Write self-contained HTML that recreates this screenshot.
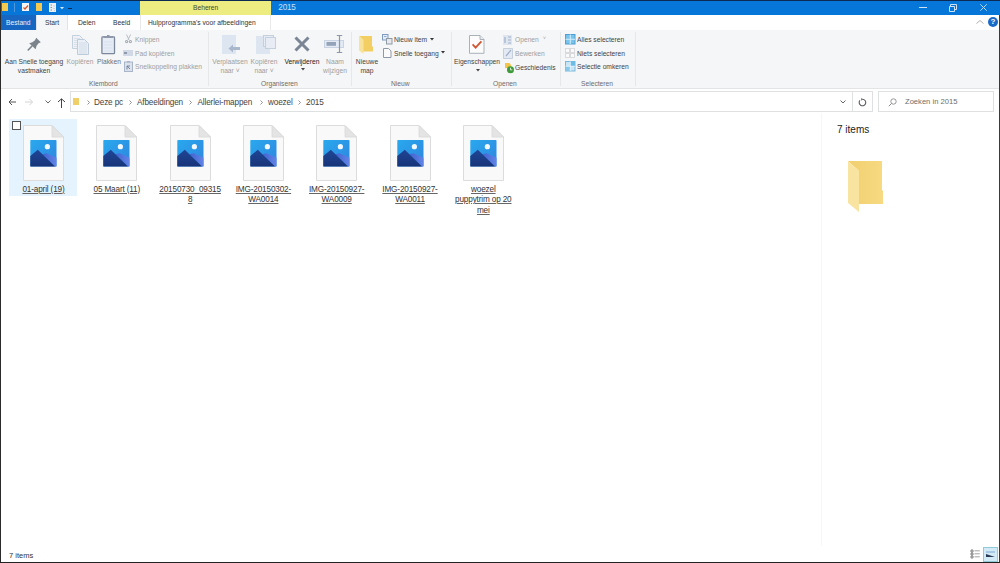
<!DOCTYPE html>
<html><head><meta charset="utf-8">
<style>
*{margin:0;padding:0;box-sizing:border-box}
html,body{width:1000px;height:563px;overflow:hidden;background:#fff;font-family:"Liberation Sans",sans-serif;color:#444}
.a{position:absolute;white-space:nowrap}
svg.a{overflow:visible}
.t7{font-size:6.7px;line-height:9px}
.t8{font-size:8px;line-height:10px}
.dis{color:#a0a0a0}
.c{text-align:center}
.glabel{color:#6d6d6d}
.lbl{font-size:8.2px;line-height:10.5px;letter-spacing:-0.15px;color:#333;text-align:center;width:72px;text-decoration:underline;text-decoration-color:#666;text-underline-offset:0.6px;text-decoration-thickness:0.8px}
</style></head><body>
<svg width="0" height="0" style="position:absolute">
<defs>
<linearGradient id="sky" x1="0" y1="0" x2="1" y2="1"><stop offset="0" stop-color="#29a9ee"/><stop offset="1" stop-color="#2f84de"/></linearGradient>
<linearGradient id="dm" x1="0" y1="0" x2="0" y2="1"><stop offset="0" stop-color="#1f4596"/><stop offset="1" stop-color="#183478"/></linearGradient>
<linearGradient id="lm" x1="0" y1="0" x2="1" y2="0"><stop offset="0" stop-color="#4262cf"/><stop offset="1" stop-color="#6284e6"/></linearGradient>
<symbol id="doc" viewBox="0 0 41 56">
<path d="M0.5 0.5 H29 L40.5 12 V55.5 H0.5 Z" fill="#f9f9f9" stroke="#dcdcdc" stroke-width="1"/>
<path d="M29 0.5 V12 H40.5 Z" fill="#e4e4e4" stroke="#d8d8d8" stroke-width="0.8"/>
<rect x="7.3" y="15" width="26.2" height="26.6" rx="0.8" fill="url(#sky)"/>
<path d="M19.5 29.3 L23.5 28.3 L33.5 32.8 V41.6 H32 Z" fill="url(#lm)"/>
<path d="M7.3 31 L14.8 24.7 L32 41.6 H7.3 Z" fill="url(#dm)"/>
<circle cx="24.4" cy="21.7" r="2.6" fill="#f2f8ff"/>
</symbol>
</defs>
</svg>

<!-- ===== Title bar ===== -->
<div class="a" style="left:0;top:0;width:1000px;height:15px;background:#0677d8"></div>
<div class="a" style="left:0;top:0;width:1000px;height:1px;background:#0d2a55"></div>
<!-- qat icons -->
<div class="a" style="left:2px;top:3px;width:6px;height:8px;background:#f3c94f"></div>
<div class="a" style="left:14px;top:3px;width:1px;height:9px;background:#4f98de"></div>
<div class="a" style="left:22px;top:3px;width:7px;height:8px;background:#f4f4f4"></div>
<svg class="a" style="left:22px;top:3px" width="7" height="8"><path d="M1.5 4.5 L3 6 L6 2.5" stroke="#d9532b" stroke-width="1.2" fill="none"/></svg>
<div class="a" style="left:36px;top:3px;width:6px;height:8px;background:#f3c94f"></div>
<div class="a" style="left:49px;top:3px;width:7px;height:9px;background:#e8eef5"></div>
<svg class="a" style="left:49px;top:3px" width="7" height="9"><path d="M1.5 2 H3 M1.5 4.5 H3 M1.5 7 H3" stroke="#a09080" stroke-width="1"/><path d="M4 3 H6 M4 5.5 H6 M5 7.5 H6" stroke="#c8ccd4" stroke-width="0.8"/></svg>
<svg class="a" style="left:60px;top:6.5px" width="4" height="3"><path d="M0 0 H4 L2 2.2 Z" fill="#d5e8fa"/></svg>
<div class="a" style="left:68px;top:8px;width:4px;height:1px;background:#0b2a56"></div>
<!-- beheren -->
<div class="a" style="left:140px;top:1px;width:131px;height:14px;background:#ecec80"></div>
<div class="a t7" style="left:193px;top:3px;color:#4a4a30">Beheren</div>
<div class="a t8" style="left:278.3px;top:3px;color:#c8e2fa;font-size:8.2px;letter-spacing:-0.2px">2015</div>
<!-- window controls -->
<div class="a" style="left:919px;top:7px;width:8px;height:1px;background:#cfe2f6"></div>
<svg class="a" style="left:948px;top:4px" width="9" height="8"><path d="M1.5 2.5 H6.5 V7.5 H1.5 Z M2.5 2.5 V0.5 H8.5 V5.5 H6.5" stroke="#cfe2f6" stroke-width="1" fill="none"/></svg>
<svg class="a" style="left:980px;top:4px" width="7" height="7"><path d="M0.3 0.3 L6.7 6.7 M6.7 0.3 L0.3 6.7" stroke="#bcdaf5" stroke-width="1" fill="none"/></svg>

<!-- ===== Tabs ===== -->
<div class="a" style="left:0;top:15px;width:1000px;height:15px;background:#fff"></div>
<div class="a" style="left:0;top:15px;width:36px;height:15px;background:#1766c1"></div>
<div class="a t7" style="left:6px;top:18px;color:#e8f0fa">Bestand</div>
<div class="a" style="left:36px;top:15px;width:32px;height:15px;background:#f5f6f7;border-left:1px solid #e2e3e5;border-right:1px solid #e2e3e5"></div>
<div class="a t7" style="left:45px;top:18px;color:#333">Start</div>
<div class="a t7" style="left:78px;top:18px;color:#333">Delen</div>
<div class="a t7" style="left:113px;top:18px;color:#333">Beeld</div>
<div class="a" style="left:140px;top:15px;width:131px;height:15px;border-left:1px solid #e8e8e8;border-right:1px solid #e8e8e8"></div>
<div class="a t7" style="left:148px;top:18px;color:#333">Hulpprogramma's voor afbeeldingen</div>
<svg class="a" style="left:976px;top:20px" width="8" height="4"><path d="M0.5 3.5 L4 0.5 L7.5 3.5" stroke="#b0b0b0" stroke-width="1" fill="none"/></svg>
<div class="a" style="left:988px;top:17px;width:10px;height:10px;border-radius:50%;background:#1b6ac6"></div>
<div class="a" style="left:988px;top:17px;width:10px;font-size:8px;line-height:10px;font-weight:bold;color:#fff;text-align:center">?</div>

<!-- ===== Ribbon ===== -->
<div class="a" style="left:0;top:30px;width:1000px;height:59px;background:#f5f6f7;border-bottom:1px solid #e3e4e6"></div>
<div class="a" style="left:208px;top:32px;width:1px;height:54px;background:#e6e7e9"></div>
<div class="a" style="left:351px;top:32px;width:1px;height:54px;background:#e6e7e9"></div>
<div class="a" style="left:451px;top:32px;width:1px;height:54px;background:#e6e7e9"></div>
<div class="a" style="left:560px;top:32px;width:1px;height:54px;background:#e6e7e9"></div>
<div class="a" style="left:635px;top:32px;width:1px;height:54px;background:#e6e7e9"></div>

<!-- Klembord -->
<svg class="a" style="left:27px;top:37px" width="15" height="15"><path d="M9.2 0.8 L13.8 5.3 L11.6 6.2 L9.6 8.8 L8.6 12.2 L2.2 6.2 L5.4 5.2 L8 3.2 Z" fill="#7d838b"/><path d="M4.8 9.2 L1.2 13" stroke="#7d838b" stroke-width="1.6" stroke-linecap="round"/></svg>
<div class="a t7 c" style="left:0;top:57px;width:68px">Aan Snelle toegang</div>
<div class="a t7 c" style="left:0;top:66px;width:68px">vastmaken</div>
<svg class="a" style="left:72px;top:35px" width="17" height="20"><path d="M0.5 0.5 H7.5 L10.5 3.5 V13.5 H0.5 Z" fill="#eef2f8" stroke="#c5d0dd"/><path d="M2 3.5H8M2 5.5H9M2 7.5H9M2 9.5H9M2 11.5H9" stroke="#cfd8e4" stroke-width="0.7"/><path d="M5.5 4.5 H12.5 L16.5 8.5 V19.5 H5.5 Z" fill="#eaf0f8" stroke="#c0cbda"/><path d="M7 8H15M7 10H15M7 12H15M7 14H15M7 16H15M7 18H15" stroke="#c9d3e1" stroke-width="0.7"/></svg>
<div class="a t7 c dis" style="left:62px;top:57px;width:36px">Kopiëren</div>
<svg class="a" style="left:101px;top:35px" width="15" height="20"><rect x="0.9" y="1.9" width="12.6" height="16.8" rx="0.8" fill="#e6ecf6" stroke="#7c879a" stroke-width="1.3"/><path d="M3 7H11.5M3 10H11.5M3 13H11.5M3 16H11.5" stroke="#d2dbea" stroke-width="0.7"/><rect x="2.5" y="1" width="9.5" height="2" fill="#8e98aa"/><rect x="6" y="0" width="2.5" height="1.5" fill="#8e98aa"/></svg>
<div class="a t7 c" style="left:96px;top:57px;width:26px;color:#707070">Plakken</div>
<svg class="a" style="left:124px;top:34px" width="9" height="10"><path d="M2.5 0.5 L5 6 M6.5 0.5 L4 6" stroke="#b8bec6" stroke-width="1"/><circle cx="2.6" cy="7.6" r="1.6" fill="#a3a9b2"/><circle cx="6.4" cy="7.6" r="1.6" fill="#a3a9b2"/><circle cx="2.6" cy="7.6" r="0.6" fill="#eef0f3"/><circle cx="6.4" cy="7.6" r="0.6" fill="#eef0f3"/></svg>
<div class="a t7 dis" style="left:135px;top:35px">Knippen</div>
<div class="a" style="left:123px;top:50px;width:10px;height:6px;background:#d2d9e6"></div>
<div class="a" style="left:124px;top:52px;width:3px;height:2px;background:#8f99ab"></div>
<div class="a t7 dis" style="left:135px;top:48.5px">Pad kopiëren</div>
<svg class="a" style="left:124px;top:61px" width="9" height="11"><rect x="0.5" y="1" width="8" height="9.5" fill="#dbe2ee" stroke="#a9b5c8"/><rect x="3" y="0" width="3" height="1.5" fill="#a9b5c8"/><path d="M3 8.5 V5 H6 M3 5 L6 8" stroke="#6b7a93" stroke-width="0.9" fill="none"/></svg>
<div class="a t7 dis" style="left:135px;top:62px">Snelkoppeling plakken</div>
<div class="a t7 glabel" style="left:89px;top:79px">Klembord</div>

<!-- Organiseren -->
<svg class="a" style="left:222px;top:35px" width="19" height="20"><rect x="0" y="0" width="14" height="19" fill="#dde5f1"/><path d="M6.5 13.5 L11 9.5 V12 H18 V15 H11 V17.5 Z" fill="#a9b7cd"/></svg>
<div class="a t7 c dis" style="left:209px;top:57px;width:42px">Verplaatsen</div>
<div class="a t7 c dis" style="left:209px;top:66px;width:42px">naar ˅</div>
<svg class="a" style="left:256px;top:35px" width="20" height="20"><rect x="0" y="1" width="14" height="18" fill="#dde5f1"/><rect x="7.5" y="0.5" width="10" height="11" fill="#e8edf5" stroke="#c6cfdc"/><rect x="9.5" y="2.5" width="10" height="11" fill="#e8edf5" stroke="#c6cfdc"/></svg>
<div class="a t7 c dis" style="left:246px;top:57px;width:36px">Kopiëren</div>
<div class="a t7 c dis" style="left:246px;top:66px;width:36px">naar ˅</div>
<svg class="a" style="left:293px;top:35px" width="18" height="18"><path d="M2.5 2.5 L15.5 15.5 M15.5 2.5 L2.5 15.5" stroke="#7a8595" stroke-width="3" stroke-linecap="butt"/></svg>
<div class="a t7 c" style="left:283px;top:57px;width:38px;color:#222">Verwijderen</div>
<svg class="a" style="left:300.5px;top:67.5px" width="4" height="3"><path d="M0 0 H4 L2 2.5 Z" fill="#444"/></svg>
<svg class="a" style="left:324px;top:34px" width="22" height="21"><rect x="0.5" y="6.5" width="19" height="7" fill="#e3eaf5" stroke="#c9d3e2"/><rect x="2.5" y="8" width="9.5" height="3.8" fill="#95a3b8"/><path d="M15.5 1.8 V18.4 M12.8 1.5 H18.2 M12.8 18.5 H18.2" stroke="#8d97a6" stroke-width="1.2"/></svg>
<div class="a t7 c dis" style="left:319px;top:57px;width:32px">Naam</div>
<div class="a t7 c dis" style="left:319px;top:66px;width:32px">wijzigen</div>
<div class="a t7 glabel" style="left:261px;top:79px">Organiseren</div>

<!-- Nieuw -->
<svg class="a" style="left:359px;top:36px" width="15" height="18"><path d="M0 0 H13 V10 L14 11 V15.5 H4 V4 Z" fill="#f3cf63"/><path d="M0 0 L4.5 4 V18 L0 14.5 Z" fill="#f9e39c"/></svg>
<div class="a t7 c" style="left:352px;top:57px;width:30px">Nieuwe</div>
<div class="a t7 c" style="left:352px;top:66px;width:30px">map</div>
<svg class="a" style="left:382px;top:34px" width="11" height="11"><rect x="0.5" y="0.5" width="5.5" height="5.5" fill="#e3ecf8" stroke="#7f9cc0"/><rect x="4.5" y="4.5" width="5.5" height="5.5" fill="#e6e8ec" stroke="#9099a6"/><path d="M2 2.5 H4.5" stroke="#7f9cc0" stroke-width="0.8"/></svg>
<div class="a t7" style="left:394px;top:35px">Nieuw item</div>
<svg class="a" style="left:430px;top:38px" width="4" height="3"><path d="M0 0 H4 L2 2.5 Z" fill="#333"/></svg>
<svg class="a" style="left:382px;top:47px" width="10" height="11"><path d="M1.5 1.5 H6.5 L9 4 V10.5 H1.5 Z" fill="#fbfbfb" stroke="#8f98a6"/></svg>
<div class="a t7" style="left:394px;top:48.5px">Snelle toegang</div>
<svg class="a" style="left:441px;top:51px" width="4" height="3"><path d="M0 0 H4 L2 2.5 Z" fill="#333"/></svg>
<div class="a t7 glabel" style="left:391px;top:79px">Nieuw</div>

<!-- Openen -->
<svg class="a" style="left:469px;top:35px" width="16" height="19"><path d="M0.5 0.5 H11 L15 4.5 V18.3 H0.5 Z" fill="#fcfcfc" stroke="#aab1b9"/><path d="M11 0.5 V4.5 H15" stroke="#aab1b9" fill="#e8ebee"/><path d="M3.6 9.3 L6.6 12.6 L12.4 6.4" stroke="#cf5736" stroke-width="1.8" fill="none"/></svg>
<div class="a t7 c" style="left:451px;top:57px;width:52px">Eigenschappen</div>
<svg class="a" style="left:475.5px;top:68.5px" width="4" height="3"><path d="M0 0 H4 L2 2.5 Z" fill="#444"/></svg>
<svg class="a" style="left:503px;top:35px" width="10" height="11"><rect x="0" y="0" width="9" height="10" fill="#dfe6f0"/><path d="M2 2 V8 M5 2 H8 M5 5 H8 M5 8 H8" stroke="#9fb0c8" stroke-width="1.2"/></svg>
<div class="a t7 dis" style="left:515px;top:35px">Openen</div>
<div class="a dis" style="left:543px;top:35px;font-size:5px;line-height:7px">˅</div>
<svg class="a" style="left:503px;top:48px" width="10" height="11"><path d="M0.5 0.5 H9.5 V10.5 H0.5 Z" fill="#e4eaf3" stroke="#c6cfdc"/><path d="M3 8 L8 2" stroke="#9fb0c8" stroke-width="1.2"/></svg>
<div class="a t7 dis" style="left:515px;top:48.5px">Bewerken</div>
<svg class="a" style="left:504px;top:62px" width="11" height="12"><path d="M1 1 H5.5 L7 3 V6 H1 Z" fill="#f2c44a"/><circle cx="6.5" cy="7.7" r="3.5" fill="#3f9a3c"/><path d="M6.5 5.7 V7.9 H8.3" stroke="#e6f3e3" stroke-width="0.9" fill="none"/></svg>
<div class="a t7" style="left:515px;top:62.8px">Geschiedenis</div>
<div class="a t7 glabel" style="left:493px;top:79px">Openen</div>

<!-- Selecteren -->
<svg class="a" style="left:565px;top:34px" width="11" height="11"><rect x="0.5" y="0.5" width="9.5" height="9.5" fill="#78c4ec" stroke="#4f9fd3"/><path d="M5.25 0.5 V10 M0.5 5.25 H10" stroke="#d6eefa" stroke-width="1"/></svg>
<div class="a t7" style="left:577px;top:35px">Alles selecteren</div>
<svg class="a" style="left:565px;top:48px" width="11" height="11"><rect x="0.5" y="0.5" width="4" height="4" fill="#fafafa" stroke="#d9dadc"/><rect x="5.5" y="0.5" width="4" height="4" fill="#fafafa" stroke="#d9dadc"/><rect x="0.5" y="5.5" width="4" height="4" fill="#fafafa" stroke="#d9dadc"/><rect x="5.5" y="5.5" width="4" height="4" fill="#fafafa" stroke="#d9dadc"/></svg>
<div class="a t7" style="left:577px;top:48.5px">Niets selecteren</div>
<svg class="a" style="left:565px;top:61px" width="11" height="11"><rect x="0.5" y="0.5" width="9.5" height="9.5" fill="#c9e5f4" stroke="#7bb8de"/><rect x="5.5" y="0.5" width="4.5" height="4.5" fill="#6cbce8"/><rect x="0.5" y="5.5" width="4.5" height="4.5" fill="#88c8ea"/><path d="M5.25 0.5 V10 M0.5 5.25 H10" stroke="#e6f4fb" stroke-width="0.8"/></svg>
<div class="a t7" style="left:577px;top:62px">Selectie omkeren</div>
<div class="a t7 glabel" style="left:581px;top:79px">Selecteren</div>

<!-- ===== Address bar ===== -->
<svg class="a" style="left:8px;top:98px" width="9" height="8"><path d="M8 4 H1 M4 1 L1 4 L4 7" stroke="#555" stroke-width="1" fill="none"/></svg>
<svg class="a" style="left:25px;top:98px" width="9" height="8"><path d="M0 4 H7.5 M4.5 1 L7.5 4 L4.5 7" stroke="#d4d4d4" stroke-width="1" fill="none"/></svg>
<svg class="a" style="left:45px;top:100px" width="6" height="4"><path d="M0.5 0.5 L3 3 L5.5 0.5" stroke="#666" stroke-width="1" fill="none"/></svg>
<svg class="a" style="left:57px;top:98px" width="9" height="10"><path d="M4.5 10 V1 M1 4 L4.5 0.8 L8 4" stroke="#444" stroke-width="1" fill="none"/></svg>
<div class="a" style="left:70px;top:91px;width:783px;height:21px;border:1px solid #dfe0e1;background:#fff"></div>
<div class="a" style="left:852px;top:91px;width:21px;height:21px;border:1px solid #dfe0e1;background:#fff"></div>
<div class="a" style="left:73px;top:98px;width:6px;height:7px;background:#f0cf68"></div>
<svg class="a" style="left:87px;top:100px" width="3" height="5"><path d="M0.5 0.5 L2.5 2.5 L0.5 4.5" stroke="#777" stroke-width="0.8" fill="none"/></svg>
<div class="a t8" style="left:94px;top:97.5px;font-size:8.2px;letter-spacing:-0.15px">Deze pc</div>
<svg class="a" style="left:129px;top:100px" width="3" height="5"><path d="M0.5 0.5 L2.5 2.5 L0.5 4.5" stroke="#777" stroke-width="0.8" fill="none"/></svg>
<div class="a t8" style="left:137px;top:97.5px;font-size:8.2px;letter-spacing:-0.15px">Afbeeldingen</div>
<svg class="a" style="left:189px;top:100px" width="3" height="5"><path d="M0.5 0.5 L2.5 2.5 L0.5 4.5" stroke="#777" stroke-width="0.8" fill="none"/></svg>
<div class="a t8" style="left:197.5px;top:97.5px;font-size:8.2px;letter-spacing:-0.15px">Allerlei-mappen</div>
<svg class="a" style="left:260px;top:100px" width="3" height="5"><path d="M0.5 0.5 L2.5 2.5 L0.5 4.5" stroke="#777" stroke-width="0.8" fill="none"/></svg>
<div class="a t8" style="left:268px;top:97.5px;font-size:8.2px;letter-spacing:-0.15px">woezel</div>
<svg class="a" style="left:298px;top:100px" width="3" height="5"><path d="M0.5 0.5 L2.5 2.5 L0.5 4.5" stroke="#777" stroke-width="0.8" fill="none"/></svg>
<div class="a t8" style="left:306px;top:97.5px;font-size:8.2px;letter-spacing:-0.15px">2015</div>
<svg class="a" style="left:840px;top:100px" width="6" height="4"><path d="M0.5 0.5 L3 3 L5.5 0.5" stroke="#666" stroke-width="1" fill="none"/></svg>
<svg class="a" style="left:858px;top:98px" width="9" height="9"><path d="M4.5 1.2 A3.3 3.3 0 1 1 1.9 2.4" stroke="#5a5a5a" stroke-width="1.1" fill="none"/><path d="M3.2 0 L5 1.3 L3.3 2.8 Z" fill="#5a5a5a"/></svg>
<div class="a" style="left:878px;top:91px;width:116px;height:21px;border:1px solid #dfe0e1;background:#fff"></div>
<svg class="a" style="left:888px;top:98px" width="9" height="9"><circle cx="5.5" cy="3.5" r="2.7" stroke="#8a8a8a" stroke-width="0.9" fill="none"/><path d="M3.5 5.5 L0.8 8.2" stroke="#8a8a8a" stroke-width="1"/></svg>
<div class="a t8" style="left:905px;top:97px;color:#6d6d6d;font-size:7.6px">Zoeken in 2015</div>

<!-- ===== Content ===== -->
<div class="a" style="left:8.5px;top:119px;width:68.5px;height:77px;background:#e5f3ff"></div>
<div class="a" style="left:12px;top:121px;width:9px;height:9px;border:1px solid #555;background:#fff"></div>

<svg class="a" style="left:23px;top:125px" width="41" height="56"><use href="#doc"/></svg>
<svg class="a" style="left:96.3px;top:125px" width="41" height="56"><use href="#doc"/></svg>
<svg class="a" style="left:169.6px;top:125px" width="41" height="56"><use href="#doc"/></svg>
<svg class="a" style="left:242.9px;top:125px" width="41" height="56"><use href="#doc"/></svg>
<svg class="a" style="left:316.2px;top:125px" width="41" height="56"><use href="#doc"/></svg>
<svg class="a" style="left:389.5px;top:125px" width="41" height="56"><use href="#doc"/></svg>
<svg class="a" style="left:462.8px;top:125px" width="41" height="56"><use href="#doc"/></svg>

<div class="a lbl" style="left:7.5px;top:184.5px">01-april (19)</div>
<div class="a lbl" style="left:80.8px;top:184.5px">05 Maart (11)</div>
<div class="a lbl" style="left:154.1px;top:184.5px">20150730_09315<br>8</div>
<div class="a lbl" style="left:227.4px;top:184.5px">IMG-20150302-<br>WA0014</div>
<div class="a lbl" style="left:300.7px;top:184.5px">IMG-20150927-<br>WA0009</div>
<div class="a lbl" style="left:374px;top:184.5px">IMG-20150927-<br>WA0011</div>
<div class="a lbl" style="left:447.3px;top:184.5px">woezel<br>puppytrim op 20<br>mei</div>

<!-- details pane -->
<div class="a" style="left:837px;top:123.5px;font-size:10px;line-height:12px;color:#222">7 items</div>
<div class="a" style="left:821px;top:113px;width:1px;height:432px;background:#f6f6f6"></div>
<svg class="a" style="left:848px;top:161px" width="36" height="53"><defs><linearGradient id="fb" x1="0" y1="0" x2="1" y2="0"><stop offset="0" stop-color="#f0cf6e"/><stop offset="1" stop-color="#f7da82"/></linearGradient></defs><path d="M0 0 H34 V29 L35 30 V43 H11 V10 Z" fill="url(#fb)"/><path d="M0 0 L11 10 V51 L0 42 Z" fill="#f9e3a0"/></svg>

<!-- status bar -->
<div class="a t8" style="left:9px;top:550.5px;color:#333;font-size:7.5px">7 items</div>
<svg class="a" style="left:970px;top:549px" width="11" height="10"><path d="M1 1 H3 V3 H1 Z M1 4 H3 V6 H1 Z M1 7 H3 V9 H1 Z" stroke="#666" stroke-width="0.8" fill="none"/><path d="M4.5 1.8 H9.8 M4.5 4.8 H9.8 M4.5 7.8 H9.8" stroke="#999" stroke-width="0.9"/></svg>
<div class="a" style="left:983px;top:547px;width:15px;height:15px;background:#d3ebf7;border:1px solid #92cad8"></div>
<svg class="a" style="left:986px;top:551px" width="10" height="7"><path d="M0 6 L0 3 L9 6 Z" fill="#2b3a55"/><path d="M0 1 H9" stroke="#7fa7d6" stroke-width="1"/></svg>

<!-- window borders -->
<div class="a" style="left:0;top:0;width:1px;height:563px;background:#2b2b2b"></div>
<div class="a" style="left:999px;top:15px;width:1px;height:548px;background:#3a3a3a"></div>
<div class="a" style="left:0;top:562px;width:1000px;height:1px;background:#222"></div>
</body></html>
